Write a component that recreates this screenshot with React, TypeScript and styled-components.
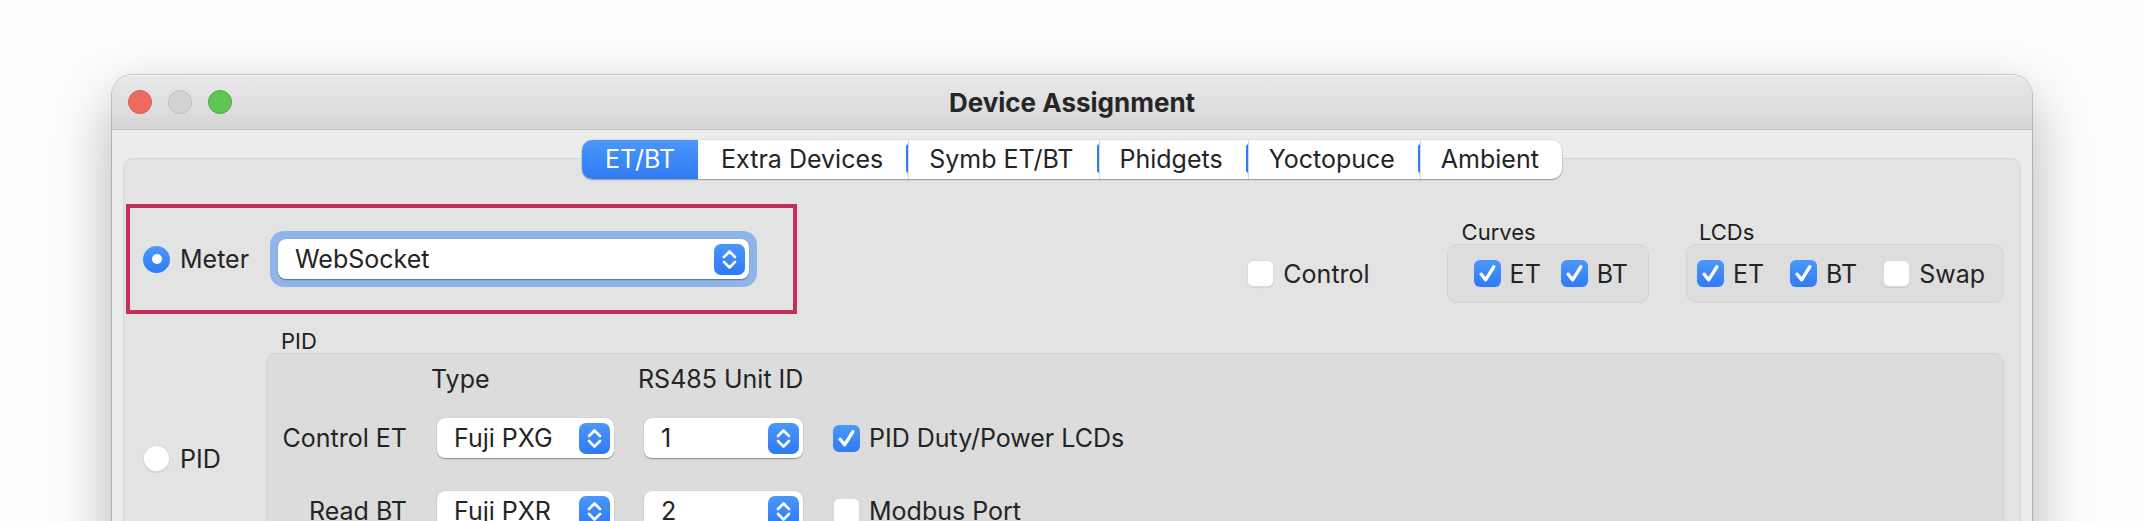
import styled, { createGlobalStyle, css } from "styled-components";

const GlobalStyle = createGlobalStyle`
  html, body {
    margin: 0;
    padding: 0;
    background: #fdfdfd;
  }
  body {
    font-family: Inter, "Liberation Sans", sans-serif;
    color: #242424;
    -webkit-font-smoothing: antialiased;
  }
`;

const tabs = ["ET/BT", "Extra Devices", "Symb ET/BT", "Phidgets", "Yoctopuce", "Ambient"];

function Check({ on }: { on?: boolean }) {
  return (
    <Box $on={on}>
      {on && (
        <svg width="27" height="27" viewBox="0 0 27 27">
          <path d="M7.2 14.2 L11.6 19.8 L19.8 6.8" fill="none" stroke="#fff" strokeWidth="3.4" strokeLinecap="round" strokeLinejoin="round" />
        </svg>
      )}
    </Box>
  );
}

function CheckItem({ on, label }: { on?: boolean; label: string }) {
  return (
    <CheckRow>
      <Check on={on} />
      <span>{label}</span>
    </CheckRow>
  );
}

function Select({ width, value }: { width: number; value: string }) {
  return (
    <SelectBox $w={width}>
      <SelectText>{value}</SelectText>
      <Stepper>
        <svg width="31" height="31" viewBox="0 0 31 31">
          <path d="M10 13 L15.5 7.5 L21 13 M10 18 L15.5 23.5 L21 18" fill="none" stroke="#fff" strokeWidth="2.6" strokeLinecap="round" strokeLinejoin="round" />
        </svg>
      </Stepper>
    </SelectBox>
  );
}

export default function App() {
  return (
    <Page>
      <GlobalStyle />
      <Window>
        <TitleBar>
          <Lights>
            <Light $c="#ee6a5f" $b="#d55b51" />
            <Light $c="#d2d2d2" $b="#bdbdbd" />
            <Light $c="#61c554" $b="#4fa842" />
          </Lights>
          <Title>Device Assignment</Title>
        </TitleBar>

        <Body>
          <TabBar>
            {tabs.map((t, i) => (
              <Tab key={t} $active={i === 0} $mark={i > 1}>
                {t}
              </Tab>
            ))}
          </TabBar>

          <Pane>
            <MeterRow>
              <FocusBox>
                <OptionCell $w={140} $pad={13}>
                  <Radio $on />
                  <span>Meter</span>
                </OptionCell>
                <FocusRing>
                  <Select width={471} value="WebSocket" />
                </FocusRing>
              </FocusBox>

              <RightCluster>
                <ControlItem>
                  <CheckItem label="Control" />
                </ControlItem>
                <Labeled>
                  <SmallLabel $indent={15}>Curves</SmallLabel>
                  <Group $pad="0 20px 0 26px" $gap={20}>
                    <CheckItem on label="ET" />
                    <CheckItem on label="BT" />
                  </Group>
                </Labeled>
                <Labeled>
                  <SmallLabel $indent={13}>LCDs</SmallLabel>
                  <Group $pad="0 18px 0 10px" $gap={26}>
                    <CheckItem on label="ET" />
                    <CheckItem on label="BT" />
                    <CheckItem label="Swap" />
                  </Group>
                </Labeled>
              </RightCluster>
            </MeterRow>

            <PidRow>
              <OptionCell $w={140} $pad={17} $top={116}>
                <Radio />
                <span>PID</span>
              </OptionCell>
              <PidColumn>
                <SmallLabel $indent={15}>PID</SmallLabel>
                <PidBox>
                  <PidGrid>
                    <span />
                    <ColHead>Type</ColHead>
                    <ColHead>RS485 Unit ID</ColHead>
                    <span />

                    <RowLabel>Control ET</RowLabel>
                    <Select width={177} value="Fuji PXG" />
                    <Select width={159} value="1" />
                    <CheckItem on label="PID Duty/Power LCDs" />

                    <RowLabel>Read BT</RowLabel>
                    <Select width={177} value="Fuji PXR" />
                    <Select width={159} value="2" />
                    <CheckItem label="Modbus Port" />
                  </PidGrid>
                </PidBox>
              </PidColumn>
            </PidRow>
          </Pane>
        </Body>
      </Window>
    </Page>
  );
}

const Page = styled.div`
  height: 521px;
  overflow: hidden;
  box-sizing: border-box;
  padding: 75px 112px 0;
  font-size: 25px;
`;

const Window = styled.div`
  height: 560px;
  border-radius: 20px 20px 0 0;
  background: #ececec;
  box-shadow: 0 0 0 1px rgba(0, 0, 0, 0.18), 0 24px 60px rgba(0, 0, 0, 0.3);
  overflow: hidden;
  display: flex;
  flex-direction: column;
`;

const TitleBar = styled.div`
  height: 55px;
  flex: none;
  box-sizing: border-box;
  display: grid;
  grid-template-columns: 1fr auto 1fr;
  align-items: center;
  background: linear-gradient(#e9e9e9, #d6d6d6);
  border-bottom: 1px solid #c3c3c3;
  box-shadow: inset 0 1px 0 rgba(255, 255, 255, 0.6);
`;

const Lights = styled.div`
  display: flex;
  gap: 16px;
  padding-left: 16px;
`;

const Light = styled.span<{ $c: string; $b: string }>`
  width: 24px;
  height: 24px;
  border-radius: 50%;
  box-sizing: border-box;
  background: ${(p) => p.$c};
  border: 1px solid ${(p) => p.$b};
`;

const Title = styled.div`
  font-size: 26px;
  font-weight: 700;
  color: #262626;
`;

const Body = styled.div`
  flex: 1;
  display: flex;
  flex-direction: column;
  padding: 10px 11px 0;
`;

const TabBar = styled.div`
  align-self: center;
  display: flex;
  height: 39px;
  background: #fff;
  border-radius: 10px;
  box-shadow: 0 1px 1.5px rgba(0, 0, 0, 0.3), 0 0 0 0.5px rgba(0, 0, 0, 0.1);
  position: relative;
  z-index: 1;
  overflow: hidden;
`;

const Tab = styled.div<{ $active?: boolean; $mark?: boolean }>`
  position: relative;
  padding: 0 23px;
  line-height: 39px;
  font-size: 25px;
  color: #242424;
  white-space: nowrap;

  ${(p) =>
    p.$active &&
    css`
      background: linear-gradient(#4b97f9, #2f7bf5);
      color: #fff;
    `}

  ${(p) =>
    p.$mark &&
    css`
      &::before {
        content: "";
        position: absolute;
        left: 0;
        top: 4px;
        bottom: 6px;
        width: 3px;
        border-radius: 3px 0 0 3px;
        background: #2f7bf5;
      }
      &::after {
        content: "";
        position: absolute;
        left: 2px;
        top: 0;
        bottom: 0;
        width: 1px;
        background: #d8d8d8;
      }
    `}
`;

const Pane = styled.div`
  flex: 1;
  margin-top: -21px;
  background: #e3e3e3;
  border: 1px solid #d7d7d7;
  border-radius: 10px;
  padding: 45px 16px 0 2px;
  display: flex;
  flex-direction: column;
`;

const MeterRow = styled.div`
  display: flex;
`;

const FocusBox = styled.div`
  width: 671px;
  height: 110px;
  box-sizing: border-box;
  border: 4px solid #c2305a;
  display: flex;
  align-items: center;
`;

const OptionCell = styled.div<{ $w: number; $pad: number; $top?: number }>`
  width: ${(p) => p.$w}px;
  box-sizing: border-box;
  padding-left: ${(p) => p.$pad}px;
  display: flex;
  align-items: center;
  gap: 10px;
  flex: none;
  ${(p) =>
    p.$top !== undefined &&
    css`
      align-self: flex-start;
      margin-top: ${p.$top}px;
      height: 27px;
    `}
`;

const Radio = styled.span<{ $on?: boolean }>`
  width: 27px;
  height: 27px;
  border-radius: 50%;
  box-sizing: border-box;
  flex: none;
  display: grid;
  place-items: center;
  ${(p) =>
    p.$on
      ? css`
          background: linear-gradient(#4d98f9, #2f7bf5);
          &::after {
            content: "";
            width: 10px;
            height: 10px;
            border-radius: 50%;
            background: #fff;
          }
        `
      : css`
          background: #fff;
          border: 1px solid rgba(0, 0, 0, 0.14);
          box-shadow: 0 1px 1px rgba(0, 0, 0, 0.08);
        `}
`;

const FocusRing = styled.div`
  padding: 8px;
  border-radius: 14px;
  background: #8fb4ea;
`;

const SelectBox = styled.div<{ $w: number }>`
  width: ${(p) => p.$w}px;
  height: 40px;
  box-sizing: border-box;
  background: #fff;
  border-radius: 8px;
  box-shadow: 0 0.5px 1px rgba(0, 0, 0, 0.28), 0 1px 2px rgba(0, 0, 0, 0.12);
  display: flex;
  align-items: center;
  padding: 0 4px 0 17px;
  font-size: 25px;
`;

const SelectText = styled.span`
  flex: 1;
  white-space: nowrap;
`;

const Stepper = styled.span`
  width: 31px;
  height: 31px;
  border-radius: 7px;
  background: linear-gradient(#4b97f9, #2e7af5);
  display: grid;
  place-items: center;
`;

const Box = styled.span<{ $on?: boolean }>`
  width: 27px;
  height: 27px;
  flex: none;
  box-sizing: border-box;
  border-radius: 6px;
  display: grid;
  place-items: center;
  ${(p) =>
    p.$on
      ? css`
          background: linear-gradient(#4b97f9, #2f7bf5);
        `
      : css`
          background: #fff;
          border: 1px solid rgba(0, 0, 0, 0.14);
          box-shadow: 0 1px 1px rgba(0, 0, 0, 0.08);
        `}
`;

const CheckRow = styled.div`
  display: flex;
  align-items: center;
  gap: 9px;
  height: 40px;
  white-space: nowrap;
`;

const RightCluster = styled.div`
  margin-left: auto;
  align-self: flex-end;
  margin-bottom: 11px;
  display: flex;
  align-items: flex-end;
  gap: 37px;
`;

const ControlItem = styled.div`
  height: 59px;
  display: flex;
  align-items: center;
  margin-right: 40px;
`;

const Labeled = styled.div`
  display: flex;
  flex-direction: column;
`;

const SmallLabel = styled.div<{ $indent: number }>`
  font-size: 22px;
  line-height: 24px;
  padding-left: ${(p) => p.$indent}px;
  color: #1e1e1e;
`;

const Group = styled.div<{ $pad: string; $gap: number }>`
  height: 59px;
  box-sizing: border-box;
  display: flex;
  align-items: center;
  gap: ${(p) => p.$gap}px;
  padding: ${(p) => p.$pad};
  background: #dddddd;
  border: 1px solid #d3d3d3;
  border-radius: 10px;
`;

const PidRow = styled.div`
  display: flex;
  margin-top: 15px;
`;

const PidColumn = styled.div`
  flex: 1;
  display: flex;
  flex-direction: column;
`;

const PidBox = styled.div`
  min-height: 260px;
  background: #dcdcdc;
  border: 1px solid #d2d2d2;
  border-radius: 10px;
  padding-top: 13px;
`;

const PidGrid = styled.div`
  display: grid;
  grid-template-columns: 140px 177px 159px auto;
  grid-template-rows: 24px 67px 73px;
  column-gap: 30px;
  align-items: end;
  justify-content: start;
`;

const ColHead = styled.div`
  line-height: 24px;
  margin-left: -6px;
  white-space: nowrap;
`;

const RowLabel = styled.div`
  text-align: right;
  line-height: 40px;
  white-space: nowrap;
`;
